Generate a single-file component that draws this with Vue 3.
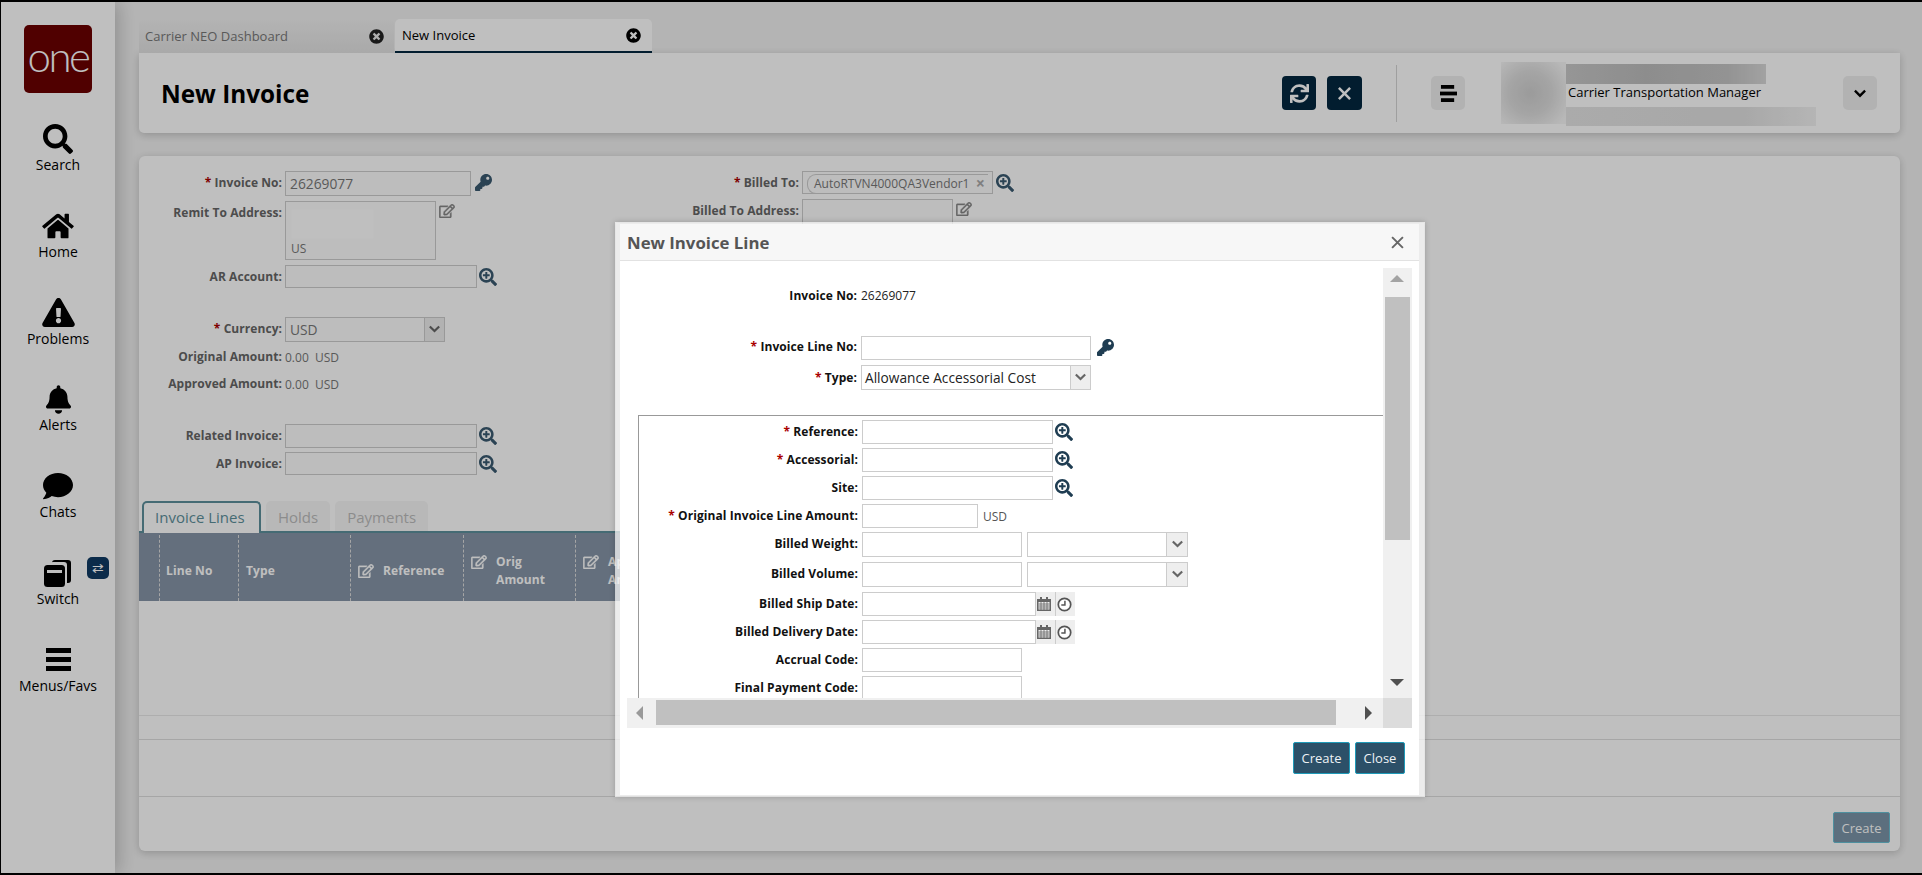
<template>
  <div class="screen">
    <aside class="sidebar">
      <div class="logo">one</div>
      <div v-for="item in navItems" :key="item.label" class="nav-item">
        <div class="nav-icon">
          <Icon v-if="item.icon" :name="item.icon" :class="item.cls" />
          <svg v-else class="ic-switch" viewBox="0 0 30 30">
            <path d="M9 5a3 3 0 0 1 3-3h13a3 3 0 0 1 3 3v17a3 3 0 0 1-3 3h-1V7a3 3 0 0 0-3-3H9z" fill="#000" />
            <rect x="1" y="7" width="21" height="22" rx="3.5" fill="#000" />
            <rect x="4" y="12" width="15" height="3" fill="#fff" />
          </svg>
          <span v-if="item.badge" class="switch-badge">⇄</span>
        </div>
        <div class="nav-label">{{ item.label }}</div>
      </div>
    </aside>

    <main class="main">
      <div class="tabs">
        <div class="tab">
          <span>Carrier NEO Dashboard</span>
          <Icon name="timesCircle" class="tab-close" />
        </div>
        <div class="tab active">
          <span>New Invoice</span>
          <Icon name="timesCircle" class="tab-close" />
        </div>
      </div>

      <header class="page-head">
        <h1>New Invoice</h1>
        <div class="head-actions">
          <button class="dark-btn"><Icon name="sync" class="ic-sync" /></button>
          <button class="dark-btn wide"><Icon name="times" class="ic-times" /></button>
          <div class="head-sep"></div>
          <button class="light-btn">
            <svg class="ic-lines" viewBox="0 0 18 20">
              <rect x="1" y="1" width="14" height="4" />
              <rect x="0" y="8" width="18" height="4" />
              <rect x="1" y="15" width="14" height="4" />
            </svg>
          </button>
          <div class="user">
            <div class="avatar"></div>
            <div class="user-text">
              <div class="smudge name"></div>
              <div class="role">Carrier Transportation Manager</div>
              <div class="smudge org"></div>
            </div>
          </div>
          <button class="light-btn"><Icon name="chevron" class="ic-chev" /></button>
        </div>
      </header>

      <section class="panel">
        <div class="form-top">
          <div class="col col-left">
            <div class="row">
              <label><em>*</em> Invoice No:</label>
              <div class="box w186 h25 value">26269077</div>
              <Icon name="key" class="ic-key dim" />
            </div>
            <div class="row">
              <label>Remit To Address:</label>
              <div class="box area w151">
                <div class="smudge addr"></div>
                <div class="us">US</div>
              </div>
              <Icon name="edit" class="ic-edit top" />
            </div>
            <div class="row">
              <label>AR Account:</label>
              <div class="box w192 h23"></div>
              <Icon name="searchPlus" class="ic-zoom dim" />
            </div>
            <div class="row section">
              <label><em>*</em> Currency:</label>
              <div class="box w160 h25 value select">
                <span>USD</span>
                <span class="sel-arrow"><Icon name="chevron" class="ic-chev small" /></span>
              </div>
            </div>
            <div class="row text-row">
              <label>Original Amount:</label>
              <span class="plain">0.00&nbsp; USD</span>
            </div>
            <div class="row text-row">
              <label>Approved Amount:</label>
              <span class="plain">0.00&nbsp; USD</span>
            </div>
            <div class="row section">
              <label>Related Invoice:</label>
              <div class="box w192 h24"></div>
              <Icon name="searchPlus" class="ic-zoom dim" />
            </div>
            <div class="row tight">
              <label>AP Invoice:</label>
              <div class="box w192 h23"></div>
              <Icon name="searchPlus" class="ic-zoom dim" />
            </div>
          </div>
          <div class="col col-right">
            <div class="row billed">
              <label><em>*</em> Billed To:</label>
              <div class="box tag-box">
                <span class="tag">AutoRTVN4000QA3Vendor1<i>×</i></span>
              </div>
              <Icon name="searchPlus" class="ic-zoom dim" />
            </div>
            <div class="row">
              <label>Billed To Address:</label>
              <div class="box area w151"></div>
              <Icon name="edit" class="ic-edit top" />
            </div>
          </div>
        </div>

        <div class="sub-tabs">
          <div class="sub-tab active">Invoice Lines</div>
          <div class="sub-tab">Holds</div>
          <div class="sub-tab">Payments</div>
        </div>

        <div class="grid-head">
          <div v-for="col in gridCols" :key="col.text" class="grid-col" :class="col.cls">
            <Icon v-if="col.edit" name="edit" class="ic-edit head" :class="{ raised: col.text.includes(' ') }" />
            <span>{{ col.text }}</span>
          </div>
        </div>
        <div class="grid-body"></div>
        <div class="grid-pager"></div>
        <div class="grid-spacer"></div>
        <footer class="panel-foot">
          <button class="create-btn">Create</button>
        </footer>
      </section>
    </main>

    <div class="overlay"></div>

    <div class="modal">
      <div class="modal-head">
        <span>New Invoice Line</span>
        <svg class="modal-x" viewBox="0 0 12 12">
          <path d="M1 1l10 10M11 1L1 11" fill="none" stroke="currentColor" stroke-width="1.8" />
        </svg>
      </div>
      <div class="modal-body">
        <div class="scroll">
          <div class="scroll-content">
            <div class="m-row info">
              <label>Invoice No:</label>
              <span>26269077</span>
            </div>
            <div class="m-row line-no">
              <label><em>*</em> Invoice Line No:</label>
              <div class="box m-input w230"></div>
              <Icon name="key" class="ic-key" />
            </div>
            <div class="m-row type">
              <label><em>*</em> Type:</label>
              <div class="box m-input w230 select">
                <span>Allowance Accessorial Cost</span>
                <span class="sel-arrow"><Icon name="chevron" class="ic-chev small" /></span>
              </div>
            </div>
            <div class="inner">
              <div v-for="f in lineFields" :key="f.label" class="i-row" :class="{ tall: f.tall }">
                <label><em v-if="f.req">*</em> {{ f.label }}:</label>
                <div class="box m-input" :class="f.w">
                  <span v-if="f.date" class="date-btns">
                    <span>
                      <svg class="ic-cal" viewBox="0 0 14 14">
                        <path d="M3 0h2v2h4V0h2v2h3v12H0V2h3z" fill="#666" />
                        <path d="M1.5 5h11v7.5h-11z" fill="#eee" />
                        <path d="M1.5 7h11M1.5 9h11M1.5 11h11M4 5v8M7 5v8M10 5v8" stroke="#666" stroke-width=".8" fill="none" />
                      </svg>
                    </span>
                    <span>
                      <svg class="ic-clock" viewBox="0 0 14 14">
                        <circle cx="7" cy="7" r="5.8" fill="#fff" stroke="#555" stroke-width="1.6" />
                        <path d="M7.4 3.5v4H4" fill="none" stroke="#555" stroke-width="1.4" />
                      </svg>
                    </span>
                  </span>
                </div>
                <Icon v-if="f.zoom" name="searchPlus" class="ic-zoom" />
                <span v-if="f.unit" class="unit">{{ f.unit }}</span>
                <div v-if="f.uom" class="box m-input w161 select uom">
                  <span class="sel-arrow"><Icon name="chevron" class="ic-chev small" /></span>
                </div>
              </div>
            </div>
          </div>
          <div class="v-track">
            <span class="arrow up"></span>
            <div class="v-thumb"></div>
            <span class="arrow down"></span>
          </div>
          <div class="h-track">
            <span class="arrow left"></span>
            <div class="h-thumb"></div>
            <span class="arrow right"></span>
          </div>
          <div class="corner"></div>
        </div>
        <div class="modal-foot">
          <button class="m-btn create">Create</button>
          <button class="m-btn close">Close</button>
        </div>
      </div>
    </div>
  </div>
</template>

<script setup>
import { h } from 'vue'

const icons = {
  search: ['0 0 512 512', 'M505 442.7L405.3 343c-4.5-4.5-10.6-7-17-7H372c27.6-35.3 44-79.7 44-128C416 93.1 322.9 0 208 0S0 93.1 0 208s93.1 208 208 208c48.3 0 92.7-16.4 128-44v16.3c0 6.4 2.5 12.5 7 17l99.7 99.7c9.4 9.4 24.6 9.4 33.9 0l28.3-28.3c9.4-9.4 9.4-24.6.1-34zM208 336c-70.7 0-128-57.2-128-128 0-70.7 57.2-128 128-128 70.7 0 128 57.2 128 128 0 70.7-57.2 128-128 128z'],
  searchPlus: ['0 0 512 512', 'M304 192v32c0 6.6-5.4 12-12 12h-56v56c0 6.6-5.4 12-12 12h-32c-6.6 0-12-5.4-12-12v-56h-56c-6.6 0-12-5.4-12-12v-32c0-6.6 5.4-12 12-12h56v-56c0-6.6 5.4-12 12-12h32c6.6 0 12 5.4 12 12v56h56c6.6 0 12 5.4 12 12zm201 284.7L476.7 505c-9.4 9.4-24.6 9.4-33.9 0L343 405.3c-4.5-4.5-7-10.6-7-17V372c-35.3 27.6-79.7 44-128 44C93.1 416 0 322.9 0 208S93.1 0 208 0s208 93.1 208 208c0 48.3-16.4 92.7-44 128h16.3c6.4 0 12.5 2.5 17 7l99.7 99.7c9.3 9.4 9.3 24.6 0 34zM344 208c0-75.2-60.8-136-136-136S72 132.8 72 208s60.8 136 136 136 136-60.8 136-136z'],
  home: ['0 0 576 512', 'M280.37 148.26L96 300.11V464a16 16 0 0 0 16 16l112.06-.29a16 16 0 0 0 15.92-16V368a16 16 0 0 1 16-16h64a16 16 0 0 1 16 16v95.64a16 16 0 0 0 16 16.05L464 480a16 16 0 0 0 16-16V300L295.67 148.26a12.19 12.19 0 0 0-15.3 0zM571.6 251.47L488 182.56V44.05a12 12 0 0 0-12-12h-56a12 12 0 0 0-12 12v72.61L318.47 43a48 48 0 0 0-61 0L4.34 251.47a12 12 0 0 0-1.6 16.9l25.5 31A12 12 0 0 0 45.15 301l235.22-193.74a12.19 12.19 0 0 1 15.3 0L530.9 301a12 12 0 0 0 16.9-1.6l25.5-31a12 12 0 0 0-1.7-16.93z'],
  warning: ['0 0 576 512', 'M569.517 440.013C587.975 472.007 564.806 512 527.94 512H48.054c-36.937 0-59.999-40.055-41.577-71.987L246.423 24.035c18.467-32.009 64.72-31.951 83.154 0l239.94 416.028zM288 354c-25.405 0-46 20.595-46 46s20.595 46 46 46 46-20.595 46-46-20.595-46-46-46zm-43.673-165.346l7.418 136c.347 6.364 5.609 11.346 11.982 11.346h48.546c6.373 0 11.635-4.982 11.982-11.346l7.418-136c.375-6.874-5.098-12.654-11.982-12.654h-63.383c-6.884 0-12.356 5.78-11.981 12.654z'],
  bell: ['0 0 448 512', 'M224 512c35.32 0 63.97-28.65 63.97-64H160.03c0 35.35 28.65 64 63.97 64zm215.39-149.71c-19.32-20.76-55.47-51.99-55.47-154.29 0-77.7-54.48-139.9-127.94-155.16V32c0-17.67-14.32-32-31.98-32s-31.98 14.33-31.98 32v20.84C118.56 68.1 64.08 130.3 64.08 208c0 102.3-36.15 133.53-55.47 154.29-6 6.45-8.66 14.16-8.61 21.71.11 16.4 12.98 32 32.1 32h383.8c19.12 0 32-15.6 32.1-32 .05-7.55-2.61-15.27-8.61-21.71z'],
  comment: ['0 0 512 512', 'M256 32C114.6 32 0 125.1 0 240c0 49.6 21.4 95 57 130.7C44.5 421.1 2.7 466 2.2 466.5c-2.2 2.3-2.8 5.7-1.5 8.7S4.8 480 8 480c66.3 0 116-31.8 140.6-51.4 32.7 12.3 69 19.4 107.4 19.4 141.4 0 256-93.1 256-208S397.4 32 256 32z'],
  bars: ['0 0 25 23', 'M0 0h25v5H0zM0 9h25v5H0zM0 18h25v5H0z'],
  key: ['0 0 512 512', 'M512 176.001C512 273.203 433.202 352 336 352c-11.22 0-22.19-1.062-32.827-3.069l-24.012 27.014A23.999 23.999 0 0 1 261.223 384H224v40c0 13.255-10.745 24-24 24h-40v40c0 13.255-10.745 24-24 24H24c-13.255 0-24-10.745-24-24v-78.059c0-6.365 2.529-12.47 7.029-16.971l161.802-161.802C163.108 213.814 160 195.271 160 176 160 78.798 238.797.001 335.999 0 433.488-.001 512 78.511 512 176.001zM336 128c0 26.51 21.49 48 48 48s48-21.49 48-48-21.49-48-48-48-48 21.49-48 48z'],
  edit: ['0 0 576 512', 'M402.3 344.9l32-32c5-5 13.7-1.5 13.7 5.7V464c0 26.5-21.5 48-48 48H48c-26.5 0-48-21.5-48-48V112c0-26.5 21.5-48 48-48h273.5c7.1 0 10.7 8.6 5.7 13.7l-32 32c-1.5 1.5-3.5 2.3-5.7 2.3H48v352h352V350.5c0-2.1.8-4.1 2.3-5.6zm156.6-201.8L296.3 405.7l-90.4 10c-26.2 2.9-48.5-19.2-45.6-45.6l10-90.4L432.9 17.1c22.9-22.9 59.9-22.9 82.7 0l43.2 43.2c22.9 22.9 22.9 60 .1 82.8zM460.1 174L402 115.9 216.2 301.8l-7.3 65.3 65.3-7.3L460.1 174zm64.8-79.7l-43.2-43.2c-4.1-4.1-10.8-4.1-14.8 0L436 82l58.1 58.1 30.9-30.9c4-4.2 4-10.8-.1-14.9z'],
  sync: ['0 0 512 512', 'M440.65 12.57l4 82.77A247.16 247.16 0 0 0 255.83 8C134.73 8 33.91 94.92 12.29 209.82A12 12 0 0 0 24.09 224h49.05a12 12 0 0 0 11.67-9.26 175.91 175.91 0 0 1 317-56.94l-101.46-4.86a12 12 0 0 0-12.57 12v47.41a12 12 0 0 0 12 12H500a12 12 0 0 0 12-12V12a12 12 0 0 0-12-12h-47.37a12 12 0 0 0-11.98 12.57zM255.83 432a175.61 175.61 0 0 1-146-77.8l101.8 4.87a12 12 0 0 0 12.57-12v-47.4a12 12 0 0 0-12-12H12a12 12 0 0 0-12 12V500a12 12 0 0 0 12 12h47.35a12 12 0 0 0 12-12.6l-4.15-82.57A247.17 247.17 0 0 0 255.83 504c121.11 0 221.93-86.92 243.55-201.82a12 12 0 0 0-11.8-14.18h-49.05a12 12 0 0 0-11.67 9.26A175.86 175.86 0 0 1 255.83 432z'],
  timesCircle: ['0 0 512 512', 'M256 8C119 8 8 119 8 256s111 248 248 248 248-111 248-248S393 8 256 8zm121.6 313.1c4.7 4.7 4.7 12.3 0 17L338 377.6c-4.7 4.7-12.3 4.7-17 0L256 312l-65.1 65.6c-4.7 4.7-12.3 4.7-17 0L134.4 338c-4.7-4.7-4.7-12.3 0-17l65.6-65-65.6-65.1c-4.7-4.7-4.7-12.3 0-17l39.6-39.6c4.7-4.7 12.3-4.7 17 0l65 65.7 65.1-65.6c4.7-4.7 12.3-4.7 17 0l39.6 39.6c4.7 4.7 4.7 12.3 0 17L312 256l65.6 65.1z'],
  times: ['0 0 16 16', 'M2.2 0L8 5.8 13.8 0 16 2.2 10.2 8l5.8 5.8-2.2 2.2L8 10.2 2.2 16 0 13.8 5.8 8 0 2.2z'],
  chevron: ['0 0 16 11', 'M2.3.6L8 6.3 13.7.6 15.9 2.8 8 10.7.1 2.8z'],
}

const Icon = (props) => {
  const [vb, d] = icons[props.name]
  return h('svg', { viewBox: vb }, h('path', { d, fill: 'currentColor' }))
}
Icon.props = ['name']

const navItems = [
  { label: 'Search', icon: 'search', cls: 'ic-nav search' },
  { label: 'Home', icon: 'home', cls: 'ic-nav home' },
  { label: 'Problems', icon: 'warning', cls: 'ic-nav warn' },
  { label: 'Alerts', icon: 'bell', cls: 'ic-nav bell' },
  { label: 'Chats', icon: 'comment', cls: 'ic-nav chat' },
  { label: 'Switch', badge: true },
  { label: 'Menus/Favs', icon: 'bars', cls: 'ic-nav bars' },
]

const gridCols = [
  { text: '', cls: 'c-sel' },
  { text: 'Line No', cls: 'c-no' },
  { text: 'Type', cls: 'c-type' },
  { text: 'Reference', cls: 'c-ref', edit: true },
  { text: 'Orig Amount', cls: 'c-amt', edit: true },
  { text: 'Approved Amount', cls: 'c-amt', edit: true },
]

const lineFields = [
  { label: 'Reference', req: true, w: 'w191', zoom: true },
  { label: 'Accessorial', req: true, w: 'w191', zoom: true },
  { label: 'Site', w: 'w191', zoom: true },
  { label: 'Original Invoice Line Amount', req: true, w: 'w116', unit: 'USD' },
  { label: 'Billed Weight', w: 'w160', uom: true, tall: true },
  { label: 'Billed Volume', w: 'w160', uom: true, tall: true },
  { label: 'Billed Ship Date', w: 'w213', date: true },
  { label: 'Billed Delivery Date', w: 'w213', date: true },
  { label: 'Accrual Code', w: 'w160' },
  { label: 'Final Payment Code', w: 'w160' },
]
</script>

<style>
html, body { margin: 0; height: 100%; overflow: hidden; background: #000; }
</style>

<style scoped>
.screen {
  position: relative;
  box-sizing: border-box;
  width: 1922px;
  height: 875px;
  display: flex;
  overflow: hidden;
  background: #f1f1f1;
  border: solid #000;
  border-width: 2px 0 2px 1px;
  font-family: "Open Sans", "Liberation Sans", sans-serif;
  font-size: 12px;
  color: #333;
}
svg { display: block; }
button { font-family: inherit; cursor: pointer; padding: 0; }

/* left nav */
.sidebar {
  flex: 0 0 114px;
  background: #fff;
  box-shadow: 3px 0 18px rgba(0, 0, 0, .22);
  z-index: 1;
  display: flex;
  flex-direction: column;
  align-items: center;
  padding-top: 23px;
}
.logo {
  width: 68px;
  height: 68px;
  margin-bottom: 26px;
  background: #6b0000;
  border-radius: 5px;
  color: #fff;
  font-family: "Lato", sans-serif;
  font-weight: 300;
  font-size: 42px;
  line-height: 62px;
  letter-spacing: -2.5px;
  text-align: center;
}
.nav-item { width: 100%; height: 86.8px; text-align: center; color: #000; }
.nav-icon {
  position: relative;
  height: 36px;
  padding-top: 4px;
  box-sizing: border-box;
  display: flex;
  align-items: center;
  justify-content: center;
}
.nav-label { font-size: 14px; line-height: 20px; }
.ic-nav.search { width: 30px; height: 30px; }
.ic-nav.home { width: 32px; height: 28px; }
.ic-nav.warn { width: 33px; height: 29px; }
.ic-nav.bell { width: 25px; height: 29px; }
.ic-nav.chat { width: 30px; height: 30px; }
.ic-nav.bars { width: 25px; height: 23px; }
.ic-switch { width: 30px; height: 30px; }
.switch-badge {
  position: absolute;
  left: 86px;
  top: 4px;
  width: 22px;
  height: 22px;
  border-radius: 5px;
  background: #0f3a63;
  color: #fff;
  font-size: 14px;
  line-height: 21px;
}

/* main area */
.main {
  flex: 1;
  min-width: 0;
  padding: 17px 22px 0 24px;
}
.tabs { display: flex; height: 34px; }
.tab {
  box-sizing: border-box;
  width: 255px;
  display: flex;
  align-items: center;
  justify-content: space-between;
  padding: 0 10px 0 6px;
  background: linear-gradient(#f0f0f0, #e2e2e2);
  border-radius: 5px 5px 0 0;
  font-size: 13px;
  color: #777;
}
.tab.active {
  width: 257px;
  margin-left: 1px;
  padding: 0 11px 0 7px;
  background: #fff;
  border-bottom: 2px solid #03273f;
  color: #000;
}
.tab-close { width: 15px; height: 15px; color: #222; }
.tab.active .tab-close { color: #000; }

.page-head {
  height: 80px;
  display: flex;
  align-items: center;
  justify-content: space-between;
  padding: 0 23px 0 22px;
  background: #fff;
  border-radius: 0 0 5px 5px;
  box-shadow: 0 2px 8px rgba(0, 0, 0, .2);
}
.page-head h1 { margin: 0; font-size: 24.3px; font-weight: 700; color: #000; }
.head-actions { display: flex; align-items: center; }
.dark-btn {
  width: 34px;
  height: 34px;
  margin-right: 11px;
  border: 0;
  border-radius: 4px;
  background: #03273f;
  color: #fff;
  display: flex;
  align-items: center;
  justify-content: center;
}
.dark-btn.wide { width: 35px; margin-right: 34px; }
.ic-sync { width: 19px; height: 19px; }
.ic-times { width: 13px; height: 13px; }
.head-sep { width: 1px; height: 57px; background: #d4d4d4; margin-right: 34px; }
.light-btn {
  width: 34px;
  height: 34px;
  border: 0;
  border-radius: 5px;
  background: #eee;
  display: flex;
  align-items: center;
  justify-content: center;
  color: #000;
}
.ic-lines { width: 17px; height: 19px; fill: #000; }
.ic-chev { width: 12px; height: 9px; }
.user { width: 378px; display: flex; padding-left: 36px; box-sizing: border-box; height: 62px; }
.avatar {
  flex: 0 0 65px;
  background: radial-gradient(circle at 45% 50%, #cfcfcf 0, #dcdcdc 45%, #f6f6f6 90%);
}
.user-text { width: 250px; padding-top: 2px; }
.smudge { background: linear-gradient(90deg, #c8c8c8, #bdbdbd 40%, #c4c4c4 80%, #d8d8d8); }
.smudge.name { width: 200px; height: 20px; }
.smudge.org { width: 250px; height: 19px; margin-top: 5px; background: linear-gradient(90deg, #e4e4e4, #e0e0e0 70%, #f2f2f2); }
.role { margin-top: -1px; font-size: 13px; line-height: 19px; color: #000; padding-left: 2px; white-space: nowrap; }

/* form panel behind the dialog */
.panel {
  height: 695px;
  margin-top: 23px;
  background: #fff;
  border-radius: 6px;
  box-shadow: 0 2px 8px rgba(0, 0, 0, .2);
  display: flex;
  flex-direction: column;
  overflow: hidden;
}
.form-top { display: flex; height: 345px; padding-top: 15px; box-sizing: border-box; }
.col-left { width: 420px; }
.row { display: flex; align-items: flex-start; margin-bottom: 5px; }
.row label {
  flex: 0 0 143px;
  margin-right: 3px;
  text-align: right;
  font-weight: 700;
  letter-spacing: .06px;
  color: #666;
  line-height: 23px;
}
.col-right .row label { flex-basis: 240px; }
label em { color: #a00; font-style: normal; }
.box {
  box-sizing: border-box;
  border: 1px solid #ccc;
  background: #fcfcfc;
}
.value { padding-left: 4px; font-size: 13.8px; line-height: 23px; color: #777; }
.w186 { width: 186px; }
.w192 { width: 192px; }
.w191 { width: 191px; }
.w160 { width: 160px; }
.w151 { width: 151px; }
.h25 { height: 25px; }
.h24 { height: 24px; }
.h23 { height: 23px; }
.area { height: 59px; padding: 7px 5px; }
.smudge.addr { width: 83px; height: 30px; background: #fff; filter: blur(1px); }
.us { margin-top: 1px; font-size: 12px; color: #777; }
.section { margin-top: 29px; }
.section + .text-row { margin-top: 1px; }
.text-row { margin: 0 0 7px; height: 20px; align-items: center; }
.text-row label { line-height: 20px; }
.plain { color: #777; }
.tight { margin-top: -1px; }
.text-row + .section { margin-top: 30px; }
.select { display: flex; justify-content: space-between; }
.sel-arrow {
  flex: 0 0 19px;
  display: flex;
  align-items: center;
  justify-content: center;
  background: #eee;
  border-left: 1px solid #ccc;
  color: #666;
}
.ic-chev.small { width: 11px; height: 8px; margin-top: -2px; }
.ic-key { flex: none; width: 17px; height: 17px; margin: 3px 0 0 6px; color: #1f3d52; }
.ic-key.dim { margin-left: 4px; }
.ic-key.dim, .ic-zoom.dim { color: #3a5a70; }
.ic-zoom { width: 18px; height: 18px; margin: 3px 0 0 2px; color: #1f3d52; }
.ic-zoom.dim { margin-left: 2px; }
.billed .ic-zoom.dim { margin-left: 3px; }
.ic-edit { width: 16px; height: 14px; color: #888; stroke: currentColor; stroke-width: 14; }
.ic-edit.top { margin: 3px 0 0 3px; }

.tag-box { width: 191px; height: 23px; padding: 2px 4px; overflow: hidden; }
.tag {
  display: flex;
  justify-content: space-between;
  height: 18px;
  padding-left: 6px;
  border: 1px solid #ccc;
  border-radius: 9px 0 0 9px;
  border-right: 0;
  font-size: 12px;
  line-height: 17px;
  color: #777;
  white-space: nowrap;
}
.tag i { font-style: normal; font-weight: 700; color: #aaa; font-size: 16px; padding-right: 3px; }

.sub-tabs {
  box-sizing: border-box;
  width: 700px;
  height: 32px;
  display: flex;
  padding-left: 3px;
  border-bottom: 2px solid #5d8f9b;
}
.sub-tab {
  box-sizing: border-box;
  height: 30px;
  margin-left: 5px;
  padding: 0 12px;
  background: #f6f6f6;
  border-radius: 5px 5px 0 0;
  font-size: 15px;
  line-height: 32px;
  color: #bbb;
}
.sub-tab.active {
  height: 32px;
  margin-left: 0;
  padding: 0 11px;
  width: 119px;
  background: #fff;
  border: 2px solid #5d8f9b;
  border-bottom: 0;
  line-height: 29px;
  color: #5d8f9b;
}

.grid-head {
  height: 68px;
  width: 700px;
  flex: none;
  display: flex;
  background: #8695a7;
  color: #fff;
  font-weight: 700;
  letter-spacing: .1px;
  padding-top: 2px;
  box-sizing: border-box;
}
.grid-col {
  box-sizing: border-box;
  flex: none;
  display: flex;
  align-items: center;
  gap: 9px;
  padding: 6px 6px 0 7px;
  border-right: 1px dashed #ddd;
  line-height: 18px;
}
.c-sel { width: 21px; }
.c-no { width: 79px; padding-left: 6px; }
.c-type { width: 112px; }
.c-ref { width: 113px; }
.c-amt { width: 112px; white-space: normal; }
.c-ref.grid-col span { white-space: nowrap; }
.ic-edit.head { flex: none; color: #fff; }
.ic-edit.head.raised { margin-top: -18px; }
.c-amt span { width: 62px; }
.grid-body { height: 114px; flex: none; border-bottom: 1px solid #e8e8e8; }
.grid-pager { height: 23px; flex: none; border-bottom: 1px solid #dedede; }
.grid-spacer { height: 56px; flex: none; border-bottom: 1px solid #dedede; }
.panel-foot { flex: 1; display: flex; justify-content: flex-end; align-items: flex-start; padding: 15px 10px 0 0; }
.create-btn {
  width: 57px;
  height: 31px;
  border: 1px solid #69c0d5;
  border-radius: 2px;
  background: #7b95a8;
  color: #fff;
  font-size: 13px;
}

.overlay { position: absolute; inset: -2px 0 -2px -1px; background: rgba(0, 0, 0, .25); z-index: 2; }

/* dialog */
.modal {
  position: absolute;
  left: 614px;
  top: 220px;
  width: 810px;
  height: 575px;
  box-sizing: border-box;
  z-index: 3;
  display: flex;
  flex-direction: column;
  background: #fff;
  background-clip: padding-box;
  border: solid rgba(255, 255, 255, .7);
  border-width: 2px 6px 2px 5px;
  box-shadow: 0 0 6px rgba(0, 0, 0, .2);
}
.modal-head {
  flex: 0 0 37px;
  box-sizing: border-box;
  display: flex;
  align-items: center;
  justify-content: space-between;
  padding: 0 15px 0 7px;
  background: #f7f7f7;
  border-bottom: 1px solid #e2e2e2;
  font-size: 16.8px;
  font-weight: 700;
  color: #555;
}
.modal-x { width: 13px; height: 13px; color: #666; }
.modal-body { flex: 1; padding: 7px 7px 0; min-height: 0; }
.scroll {
  display: grid;
  grid-template-columns: 756px 29px;
  grid-template-rows: 430px 30px;
  background: #fff;
}
.scroll-content { overflow: hidden; padding-top: 18px; box-sizing: border-box; color: #222; }
.m-row { display: flex; align-items: flex-start; }
.m-row label, .i-row label {
  text-align: right;
  font-weight: 700;
  letter-spacing: .08px;
  color: #111;
  line-height: 23px;
}
.m-row label { flex: 0 0 230px; margin-right: 4px; }
.m-row.info { height: 20px; line-height: 20px; font-size: 12px; }
.m-row.info label { line-height: 20px; }
.m-row.line-no { margin-top: 30px; }
.m-row.line-no label { line-height: 22px; }
.m-row.type { margin-top: 5px; }
.m-row.type label { line-height: 25px; }
.m-input { border-color: #ccc; background: #fff; }
.m-row .m-input { height: 24px; }
.m-row.type .m-input { height: 25px; padding-left: 3px; font-size: 13.7px; line-height: 23px; color: #222; }
.w230 { width: 230px; }
.w116 { width: 116px; }
.w161 { width: 161px; }
.w213 { width: 213px; }
.inner {
  margin: 25px 0 0 11px;
  padding-top: 4px;
  border-top: 1px solid #999;
  border-left: 1px solid #999;
}
.i-row { display: flex; align-items: flex-start; height: 24px; margin-bottom: 4px; }
.i-row.tall { height: 25px; margin-bottom: 5px; }
.i-row label { flex: 0 0 219px; margin-right: 4px; }
.i-row .m-input { height: 100%; }
.date-btns { display: flex; justify-content: flex-end; height: 100%; margin-right: -1px; }
.m-input:has(.date-btns) { display: flex; justify-content: flex-end; }
.date-btns > span {
  box-sizing: border-box;
  width: 20px;
  margin-top: -1px;
  padding-right: 3px;
  height: calc(100% + 2px);
  display: flex;
  align-items: center;
  justify-content: center;
  background: #eee;
  border-left: 1px solid #ccc;
}
.ic-cal { width: 14px; height: 14px; }
.ic-clock { width: 15px; height: 15px; }
.unit { margin: 4px 0 0 5px; color: #555; }
.uom { margin-left: 5px; justify-content: flex-end; }
.uom .sel-arrow { flex-basis: 20px; }

.v-track, .h-track { position: relative; background: #f0f0f0; }
.v-thumb { position: absolute; left: 2px; right: 2px; top: 29px; height: 243px; background: #c0c0c0; }
.h-thumb { position: absolute; left: 29px; top: 2px; bottom: 3px; width: 680px; background: #c0c0c0; }
.corner { background: #dcdcdc; }
.arrow { position: absolute; width: 0; height: 0; border: 7px solid transparent; }
.arrow.up { left: 7px; top: 7px; border-top: 0; border-bottom-color: #a3a3a3; }
.arrow.down { left: 7px; bottom: 12px; border-bottom: 0; border-top-color: #505050; }
.arrow.left { left: 9px; top: 8px; border-left: 0; border-right-color: #999; }
.arrow.right { right: 11px; top: 8px; border-right: 0; border-left-color: #505050; }

.modal-foot { display: flex; justify-content: flex-end; gap: 5px; padding: 14px 7px 0 0; }
.m-btn {
  height: 32px;
  border: 1px solid #1e9ab8;
  border-radius: 2px;
  background: #2c5068;
  color: #eef2f5;
  font-size: 13px;
}
.m-btn.create { width: 57px; }
.m-btn.close { width: 50px; }
</style>
